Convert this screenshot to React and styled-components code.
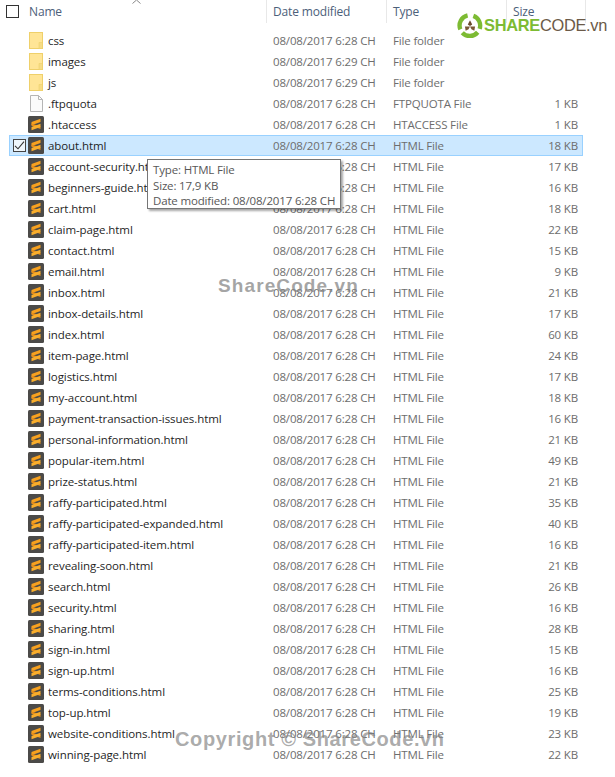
import React from "react";
import styled, { createGlobalStyle } from "styled-components";

const GlobalStyle = createGlobalStyle`
  html, body {
    margin: 0;
    padding: 0;
    background: #fff;
  }
`;

const FOLDER_ROWS = [
  { name: "css", icon: "folder", date: "6:28", type: "File folder" },
  { name: "images", icon: "folder", date: "6:29", type: "File folder" },
  { name: "js", icon: "folder", date: "6:29", type: "File folder" },
  { name: ".ftpquota", icon: "blank", date: "6:28", type: "FTPQUOTA File", size: "1 KB" },
  { name: ".htaccess", icon: "sublime", date: "6:28", type: "HTACCESS File", size: "1 KB" },
];

const HTML_ROWS = [
  ["about.html", "18 KB"],
  ["account-security.html", "17 KB"],
  ["beginners-guide.html", "16 KB"],
  ["cart.html", "18 KB"],
  ["claim-page.html", "22 KB"],
  ["contact.html", "15 KB"],
  ["email.html", "9 KB"],
  ["inbox.html", "21 KB"],
  ["inbox-details.html", "17 KB"],
  ["index.html", "60 KB"],
  ["item-page.html", "24 KB"],
  ["logistics.html", "17 KB"],
  ["my-account.html", "18 KB"],
  ["payment-transaction-issues.html", "16 KB"],
  ["personal-information.html", "21 KB"],
  ["popular-item.html", "49 KB"],
  ["prize-status.html", "21 KB"],
  ["raffy-participated.html", "35 KB"],
  ["raffy-participated-expanded.html", "40 KB"],
  ["raffy-participated-item.html", "16 KB"],
  ["revealing-soon.html", "21 KB"],
  ["search.html", "26 KB"],
  ["security.html", "16 KB"],
  ["sharing.html", "28 KB"],
  ["sign-in.html", "15 KB"],
  ["sign-up.html", "16 KB"],
  ["terms-conditions.html", "25 KB"],
  ["top-up.html", "19 KB"],
  ["website-conditions.html", "23 KB"],
  ["winning-page.html", "22 KB"],
];

const Page = styled.div`
  position: relative;
  width: 615px;
  height: 777px;
  overflow: hidden;
  background: #fff;
  font-family: "Open Sans", "Noto Sans", sans-serif;
  font-size: 11.5px;
  letter-spacing: -0.16px;
`;

const Header = styled.div`
  display: grid;
  grid-template-columns: 267px 120px 120px 79px;
  height: 23px;
  margin-bottom: 7px;
`;

const HeaderCell = styled.div`
  display: flex;
  align-items: center;
  gap: 10px;
  padding-left: 6px;
  color: #4c607a;
  font-size: 12px;
  border-right: 1px solid #e8e8e8;
`;

const HeaderBox = styled.span`
  width: 11px;
  height: 11px;
  border: 1px solid #333;
`;

const SortCaret = styled.svg`
  position: absolute;
  left: 132px;
  top: 0;
`;

const Row = styled.div`
  display: grid;
  grid-template-columns: 267px 120px 120px 61px;
  align-items: center;
  box-sizing: border-box;
  width: 574px;
  height: 21px;
  margin-left: 9px;
  border: 1px solid ${props => props.$selected ? "#99d1ff" : "transparent"};
  background: ${props => props.$selected ? "#cce8ff" : "transparent"};
  color: #6d6d6d;
`;

const NameCell = styled.div`
  display: flex;
  align-items: center;
  margin-left: -1px;
  padding-left: 4px;
  color: #1f1f1f;
  letter-spacing: -0.08px;
  white-space: nowrap;
`;

const CheckSlot = styled.span`
  display: flex;
  width: 15px;
  height: 14px;
`;

const RowCheck = styled.span`
  display: flex;
  align-items: center;
  justify-content: center;
  box-sizing: border-box;
  width: 13px;
  height: 13px;
  border: 1px solid #444;
  background: #eef6fc;
`;

const IconSlot = styled.span`
  display: flex;
  justify-content: center;
  width: 16px;
  margin-right: 4px;
`;

const DateCell = styled.div`
  margin-left: -4px;
`;

const TypeCell = styled.div`
  margin-left: -4px;
`;

const SizeCell = styled.div`
  text-align: right;
`;

const Tooltip = styled.div`
  position: absolute;
  left: 147px;
  top: 159px;
  box-sizing: border-box;
  width: 194px;
  height: 50px;
  padding: 2px 5px;
  border: 1px solid #767676;
  background: #fff;
  box-shadow: 2px 2px 2px rgba(0, 0, 0, 0.35);
  color: #575757;
  line-height: 15.5px;
  white-space: nowrap;
`;

const WatermarkMid = styled.div`
  position: absolute;
  left: 218px;
  top: 275px;
  color: rgba(130, 130, 130, 0.72);
  font-family: "Liberation Sans", Arial, sans-serif;
  font-size: 19px;
  font-weight: 700;
  letter-spacing: 1.1px;
  white-space: nowrap;
`;

const WatermarkBottom = styled.div`
  position: absolute;
  left: 175px;
  top: 728px;
  color: rgba(130, 130, 130, 0.68);
  font-family: "Liberation Sans", Arial, sans-serif;
  font-size: 20px;
  font-weight: 700;
  letter-spacing: 0.62px;
  white-space: nowrap;
`;

const Logo = styled.div`
  position: absolute;
  left: 457px;
  top: 12px;
  display: flex;
  align-items: center;
  gap: 1px;
`;

const LogoText = styled.span`
  color: #6b5a48;
  font-family: "Liberation Sans", Arial, sans-serif;
  font-size: 16.4px;
  letter-spacing: -0.3px;
  white-space: nowrap;
`;

const LogoShare = styled.b`
  color: #7dbb33;
`;

const FolderIcon = () => (
  <svg width="14" height="17" viewBox="0 0 14 17">
    <rect x="0.5" y="0.500" width="13" height="16" fill="#ffe596" stroke="#efd06a" />
    <path d="M10 16.500V10.500h3.500v6z" fill="#f6dc86" stroke="#efd06a" strokeWidth="0.6" />
  </svg>
);

const BlankIcon = () => (
  <svg width="13" height="17" viewBox="0 0 13 17">
    <path d="M.5.5h8l4 4v12H.5z" fill="#fbfbfb" stroke="#b5b5b5" />
    <path d="M8.500.500v4h4" fill="none" stroke="#b5b5b5" />
  </svg>
);

const SublimeIcon = () => (
  <svg width="16" height="17" viewBox="0 0 16 17">
    <rect width="16" height="17" rx="1.500" fill="#4b4a48" />
    <path d="M3.500 6 12.500 2.800V6L3.500 9.200z" fill="#f7a11f" />
    <path d="M3.500 7.500 12.500 10.500V13L3.500 9.800z" fill="#e8901a" />
    <path d="M3.500 11 12.500 7.800V11L3.500 14.200z" fill="#f9ae2c" />
  </svg>
);

const CheckMark = () => (
  <svg width="11" height="11" viewBox="0 0 11 11">
    <path d="M1 5.800 4 8.800 10 1.600" fill="none" stroke="#333" strokeWidth="1.100" />
  </svg>
);

const LogoMark = () => (
  <svg width="26" height="27" viewBox="0 0 27 27">
    <path d="M17 3.500A10.700 10.700 0 0 1 23.500 17" fill="none" stroke="#7dbb33" strokeWidth="4.500" />
    <path d="M21.500 20.500A10.700 10.700 0 0 1 5.500 21" fill="none" stroke="#7dbb33" strokeWidth="4.500" />
    <path d="M3.500 17.500A10.700 10.700 0 0 1 11 3" fill="none" stroke="#7dbb33" strokeWidth="4.500" />
    <path d="M13.500 8 15.800 12.500 13.500 14 11.200 12.500z" fill="#6b4a2e" />
    <path d="M13.500 14.500 18.800 14.500 18 19 15 17.500z" fill="#7a5836" />
    <path d="M13.500 14.500 8.200 14.500 9 19 12 17.500z" fill="#7a5836" />
  </svg>
);

const icons = {
  folder: <FolderIcon />,
  blank: <BlankIcon />,
  sublime: <SublimeIcon />,
};

const FileRow = ({ name, icon, time, type, size, selected }) => (
  <Row $selected={selected}>
    <NameCell>
      <CheckSlot>{selected && <RowCheck><CheckMark /></RowCheck>}</CheckSlot>
      <IconSlot>{icons[icon]}</IconSlot>
      {name}
    </NameCell>
    <DateCell>08/08/2017 {time} CH</DateCell>
    <TypeCell>{type}</TypeCell>
    <SizeCell>{size}</SizeCell>
  </Row>
);

export default function App() {
  return (
    <Page>
      <GlobalStyle />
      <Header>
        <HeaderCell>
          <HeaderBox />
          Name
        </HeaderCell>
        <HeaderCell>Date modified</HeaderCell>
        <HeaderCell>Type</HeaderCell>
        <HeaderCell>Size</HeaderCell>
      </Header>
      <SortCaret width="9" height="4" viewBox="0 0 9 4">
        <path d="M.5 3.500 4.500 0 8.500 3.500" fill="none" stroke="#888" />
      </SortCaret>

      {FOLDER_ROWS.map(row => (
        <FileRow key={row.name} name={row.name} icon={row.icon} time={row.date} type={row.type} size={row.size} />
      ))}
      {HTML_ROWS.map(([name, size], i) => (
        <FileRow key={name} name={name} icon="sublime" time="6:28" type="HTML File" size={size} selected={i === 0} />
      ))}

      <Tooltip>
        Type: HTML File<br />
        Size: 17,9 KB<br />
        Date modified: 08/08/2017 6:28 CH
      </Tooltip>

      <WatermarkMid>ShareCode.vn</WatermarkMid>
      <WatermarkBottom>Copyright © ShareCode.vn</WatermarkBottom>

      <Logo>
        <LogoMark />
        <LogoText><LogoShare>SHARE</LogoShare>CODE.vn</LogoText>
      </Logo>
    </Page>
  );
}
